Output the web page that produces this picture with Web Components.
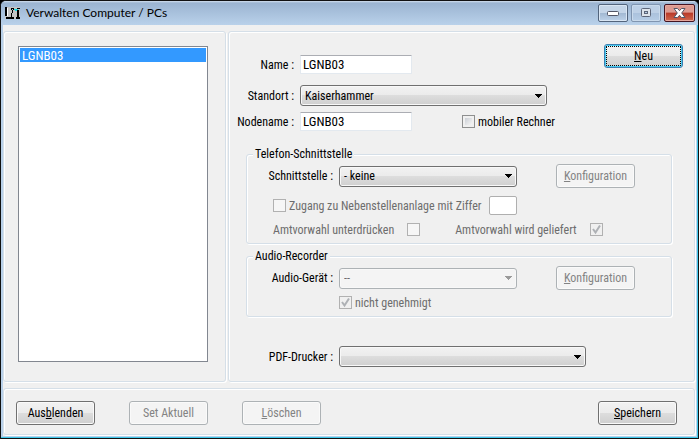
<!DOCTYPE html>
<html lang="de">
<head>
<meta charset="utf-8">
<title>Verwalten Computer / PCs</title>
<style>
    body {
        margin: 0;
        background: #000;
        color: #000;
        font: 12px/16px "Roboto Condensed", Lato, sans-serif;
    }
    .middle {
        display: grid;
        grid-template-columns: 223px 1fr;
        gap: 2px;
        flex: 1;
    }
    .list { padding: 14px 17px 19px 14px; }
    .details { padding: 12px 11px 14px 6px; }
    .head {
        display: flex;
        justify-content: space-between;
        align-items: flex-start;
    }
    .fields {
        display: flex;
        flex-direction: column;
        padding-top: 11px;
        --label-width: 59px;
    }
    .fields combo-box { margin: 11px 0 6px; }
    .row { display: flex; align-items: center; }
    .between { justify-content: space-between; }
    .node { gap: 50px; }
    .groups {
        display: flex;
        flex-direction: column;
        gap: 5px;
        margin: 16px 11px 0 11px;
        --label-width: 86px;
    }
    .group-row { padding-right: 36px; }
    .phone-line { gap: 3px; margin: 8px 0 8px 26px; }
    .prefix { gap: 35px; margin-left: 26px; }
    .approved { margin: 6px 0 0 92px; }
    .printer { margin-top: 29px; --label-width: 98px; }
    .footer {
        display: flex;
        gap: 34px;
        padding: 12px 17px 9px 12px;
        margin-top: 6px;
    }
    .last { margin-left: auto; }
</style>
</head>
<body>

<template id="app-window">
    <style>
        :host {
            display: flex;
            flex-direction: column;
            box-sizing: border-box;
            min-height: 100vh;
            border: 1px solid #111;
            border-radius: 6px 6px 0 0;
            background: #b9d1ea;
            box-shadow: inset -1px -1px #3fc8ea;
            padding: 0 2px 2px;
        }
        header {
            display: flex;
            align-items: center;
            height: 24px;
            padding: 0 1px 0 4px;
            margin: 0 -2px;
            border-radius: 5px 5px 0 0;
            background: linear-gradient(#d3e0ee 0, #9bb4d1 2px, #b9d1ea 100%);
        }
        header > svg { margin-right: 5px; }
        h1 {
            flex: 1;
            margin: 0;
            font: 12px/20px Lato, sans-serif;
        }
        nav { display: flex; gap: 3px; margin-right: 2px; }
        nav button {
            display: grid;
            place-items: center;
            width: 30px;
            height: 18px;
            padding: 0;
            border: 1px solid #52647c;
            border-radius: 2px;
            background: linear-gradient(#c4d5e8 50%, #a1b8d2 50%, #bdd2e9);
            box-shadow: inset 0 0 0 1px #d9e6f4;
        }
        nav button:disabled {
            border-color: #8095b0;
            background: linear-gradient(#bdd0e6 50%, #aac1dc 50%, #b6cde6);
            box-shadow: inset 0 0 0 1px #c9daec;
        }
        nav .close {
            width: 31px;
            border-color: #431422;
            background: linear-gradient(#dc9a90 45%, #b93827 50%, #cf6a50);
            box-shadow: inset 0 0 0 1px #e6a69c;
        }
        main {
            display: flex;
            flex: 1;
            flex-direction: column;
            box-sizing: border-box;
            padding: 6px 1px 1px 0;
            background: #f0f0f0;
        }
    </style>
    <header>
        <svg width="16" height="13" viewBox="0 0 16 13" shape-rendering="crispEdges" aria-hidden="true">
            <path fill="#c4c4c4" d="M0 0h15v12H0z"/>
            <path fill="#000" d="M0 0h2v9H0zM1 10h4v2H1zM6 1h3v1H6zM6 2h1v1H6zM7 3h1v3H7zM6 6h1v4H6zM5 10h4v2H5zM12 3h2v7h-2zM11 10h4v2h-4zM8 2h1v1H8zM12 1h3v1h-3z"/>
            <path fill="#18d8e0" d="M9 2h4v1H9zM10 3h2v1h-2z"/>
            <path fill="#fff" d="M2 1h1v8H2z"/>
        </svg>
        <h1></h1>
        <nav>
            <button type="button" aria-label="Minimieren">
                <svg width="12" height="6" viewBox="0 0 12 6"><rect x=".5" y="1.5" width="11" height="4" rx="1" fill="#fff" stroke="#535666"/></svg>
            </button>
            <button type="button" aria-label="Maximieren" disabled>
                <svg width="12" height="10" viewBox="0 0 12 10"><rect x="1.5" y=".5" width="9" height="8" rx="1" fill="#dde3ea" stroke="#5c6577"/><rect x="4.500" y="3.500" width="3" height="2" fill="#b5cbe4" stroke="#5c6577"/></svg>
            </button>
            <button type="button" class="close" aria-label="Schließen">
                <svg width="13" height="10" viewBox="0 0 13 10"><path fill="#fff" stroke="#535666" d="M1 .5h3.500l2 2.200 2-2.200H12L8.700 5l3.300 4.500H8.500l-2-2.200-2 2.200H1L4.300 5z"/></svg>
            </button>
        </nav>
    </header>
    <main><slot></slot></main>
</template>

<template id="etched-panel">
    <style>
        :host {
            display: block;
            box-sizing: border-box;
            border: 1px solid #d5dfe8;
            border-radius: 3px;
            box-shadow: inset 1px 1px #fff, 1px 1px #fff;
        }
    </style>
    <slot></slot>
</template>

<template id="group-box">
    <style>
        :host { display: block; }
        fieldset {
            min-width: 0;
            margin: 0;
            padding: 3px 0 7px;
            border: 1px solid #d5dfe8;
            border-radius: 3px;
            box-shadow: inset 1px 1px #fff, 1px 1px #fff;
        }
        legend {
            height: 14px;
            margin-left: 6px;
            padding: 0 2px;
            line-height: 14px;
            background: #f0f0f0;
        }
    </style>
    <fieldset>
        <legend></legend>
        <slot></slot>
    </fieldset>
</template>

<template id="push-button">
    <style>
        :host { display: block; }
        button {
            display: block;
            box-sizing: border-box;
            width: 79px;
            height: 24px;
            padding: 0;
            border: 1px solid #707070;
            border-radius: 3px;
            background: linear-gradient(#f2f2f2, #ebebeb 50%, #dddddd 50%, #cfcfcf);
            box-shadow: inset 0 0 0 1px #fafafa;
            color: inherit;
            font: inherit;
        }
        button:disabled {
            border-color: #adb2b5;
            background: #f4f4f4;
            color: #838383;
        }
        :host([default]) button {
            border-color: #3c7fb1;
            box-shadow: inset 0 0 0 1px #48cdf4;
            outline: 1px dotted #000;
            outline-offset: -3px;
        }
    </style>
    <button type="button"><slot></slot></button>
</template>

<template id="text-field">
    <style>
        :host { display: flex; align-items: center; gap: 6px; }
        label {
            flex: none;
            width: var(--label-width);
            text-align: right;
            white-space: nowrap;
        }
        input {
            box-sizing: border-box;
            width: 112px;
            height: 19px;
            padding: 0 2px;
            border: 1px solid #e3e9ef;
            border-top-color: #abadb3;
            border-radius: 1px;
            background: #fff;
            color: inherit;
            font: inherit;
            font-size: 13px;
        }
        :host([disabled]) { gap: 8px; }
        :host([disabled]) label { width: auto; color: #6d6d6d; }
        :host([disabled]) input {
            width: 28px;
            border-color: #afafaf;
            border-radius: 2px;
        }
    </style>
    <label for="control"></label>
    <input id="control" type="text">
</template>

<template id="combo-box">
    <style>
        :host { display: flex; align-items: center; gap: 6px; }
        label {
            flex: none;
            width: var(--label-width);
            text-align: right;
            white-space: nowrap;
        }
        .box { display: grid; align-items: center; }
        select, svg { grid-area: 1 / 1; }
        svg {
            justify-self: end;
            margin-right: 5px;
            pointer-events: none;
        }
        select {
            appearance: none;
            box-sizing: border-box;
            width: 178px;
            height: 21px;
            padding: 0 20px 0 4px;
            border: 1px solid #707070;
            border-radius: 3px;
            background: linear-gradient(#f2f2f2, #ebebeb 50%, #dddddd 50%, #cfcfcf);
            box-shadow: inset 0 0 0 1px #f8f8f8;
            color: inherit;
            font: inherit;
        }
        :host([wide]) select { width: 247px; }
        select:disabled {
            border-color: #adb2b5;
            background: #f4f4f4;
            color: #6d6d6d;
            opacity: 1;
        }
        select:disabled + svg { color: #9a9a9a; }
    </style>
    <label for="control"></label>
    <span class="box">
        <select id="control"></select>
        <svg width="7" height="4" viewBox="0 0 7 4" aria-hidden="true" shape-rendering="crispEdges"><path fill="currentColor" d="M0 0h7v1H0zM1 1h5v1H1zM2 2h3v1H2zM3 3h1v1H3z"/></svg>
    </span>
</template>

<template id="check-box">
    <style>
        :host { display: flex; align-items: center; height: 13px; gap: 3px; }
        :host([label-first]) { flex-direction: row-reverse; gap: 13px; }
        label { white-space: nowrap; }
        input {
            appearance: none;
            flex: none;
            box-sizing: border-box;
            width: 13px;
            height: 13px;
            margin: 0;
            border: 1px solid #8e8f8f;
            background: linear-gradient(135deg, #cbcfd5, #f6f6f6) content-box #f4f4f4;
            padding: 2px;
            outline: 0;
        }
        input:disabled { border-color: #b1b1b1; background: #f6f6f6; }
        input:disabled + label { color: #6d6d6d; }
        input:checked {
            padding: 0;
            background: #f0f0f0 url("data:image/svg+xml,%3Csvg xmlns='http://www.w3.org/2000/svg' viewBox='0 0 11 11'%3E%3Cpath d='M2 5l2.500 3.500L9 1.500' fill='none' stroke='%23aeb1b5' stroke-width='2'/%3E%3C/svg%3E") center / 11px no-repeat;
        }
    </style>
    <input id="control" type="checkbox">
    <label for="control"></label>
</template>

<template id="list-box">
    <style>
        :host { display: grid; box-sizing: border-box; height: 100%; }
        select {
            width: 100%;
            height: 100%;
            box-sizing: border-box;
            margin: 0;
            padding: 1px;
            border: 1px solid #828790;
            border-radius: 0;
            outline: 0;
            overflow: hidden;
            background: #fff;
            color: #000;
            font: inherit;
            font-size: 13px;
        }
        option {
            min-height: 0;
            height: 14px;
            padding: 0 2px;
            line-height: 14px;
        }
        option:checked {
            background: #3399ff linear-gradient(#3399ff, #3399ff);
            color: #fff;
        }
    </style>
    <select size="20"></select>
</template>

<app-window caption="Verwalten Computer / PCs">
    <div class="middle">
        <etched-panel class="list">
            <list-box label="Computer" options="LGNB03"></list-box>
        </etched-panel>
        <etched-panel class="details">
            <div class="head">
                <div class="fields">
                    <text-field label="Name :" value="LGNB03"></text-field>
                    <combo-box wide label="Standort :" options="Kaiserhammer"></combo-box>
                    <div class="row node">
                        <text-field label="Nodename :" value="LGNB03"></text-field>
                        <check-box label="mobiler Rechner"></check-box>
                    </div>
                </div>
                <push-button default><u>N</u>eu</push-button>
            </div>
            <div class="groups">
                <group-box label="Telefon-Schnittstelle">
                    <div class="row between group-row">
                        <combo-box label="Schnittstelle :" options="- keine"></combo-box>
                        <push-button disabled><u>K</u>onfiguration</push-button>
                    </div>
                    <div class="row phone-line">
                        <check-box disabled label="Zugang zu Nebenstellenanlage"></check-box>
                        <text-field disabled label="mit Ziffer"></text-field>
                    </div>
                    <div class="row prefix">
                        <check-box disabled label-first label="Amtvorwahl unterdrücken"></check-box>
                        <check-box disabled checked label-first label="Amtvorwahl wird geliefert"></check-box>
                    </div>
                </group-box>
                <group-box label="Audio-Recorder">
                    <div class="row between group-row">
                        <combo-box disabled label="Audio-Gerät :" options="--"></combo-box>
                        <push-button disabled><u>K</u>onfiguration</push-button>
                    </div>
                    <check-box class="approved" disabled checked label="nicht genehmigt"></check-box>
                </group-box>
            </div>
            <combo-box class="printer" wide label="PDF-Drucker :" options=""></combo-box>
        </etched-panel>
    </div>
    <etched-panel class="footer">
        <push-button>Aus<u>b</u>lenden</push-button>
        <push-button disabled>Set Aktuell</push-button>
        <push-button disabled><u>L</u>öschen</push-button>
        <push-button class="last"><u>S</u>peichern</push-button>
    </etched-panel>
</app-window>

<script>
    class BaseElement extends HTMLElement {

        constructor() {
            super();
            this._root = this.attachShadow({ mode: 'open' });
            var template = document.querySelector('template#' + this.localName);
            this._root.appendChild(template.content.cloneNode(true));
        }

        find(selector) {
            return this._root.querySelector(selector);
        }

        attr(name) {
            return this.getAttribute(name) || '';
        }
    }

    class AppWindow extends BaseElement {
        connectedCallback() {
            this.find('h1').textContent = this.attr('caption');
        }
    }

    class EtchedPanel extends BaseElement { }

    class GroupBox extends BaseElement {
        connectedCallback() {
            this.find('legend').textContent = this.attr('label');
        }
    }

    class PushButton extends BaseElement {
        connectedCallback() {
            this.find('button').disabled = this.hasAttribute('disabled');
        }
    }

    class TextField extends BaseElement {
        connectedCallback() {
            var input = this.find('input');
            this.find('label').textContent = this.attr('label');
            input.value = this.attr('value');
            input.disabled = this.hasAttribute('disabled');
        }
    }

    class CheckBox extends BaseElement {
        connectedCallback() {
            var input = this.find('input');
            this.find('label').textContent = this.attr('label');
            input.checked = this.hasAttribute('checked');
            input.disabled = this.hasAttribute('disabled');
        }
    }

    class ComboBox extends BaseElement {
        connectedCallback() {
            var select = this.find('select');
            this.find('label').textContent = this.attr('label');
            select.disabled = this.hasAttribute('disabled');
            select.replaceChildren(...this.attr('options').split('|').map((text) => new Option(text)));
        }
    }

    class ListBox extends BaseElement {
        connectedCallback() {
            var select = this.find('select');
            select.setAttribute('aria-label', this.attr('label'));
            select.replaceChildren(...this.attr('options').split('|').map((text) => new Option(text)));
            select.selectedIndex = 0;
        }
    }

    customElements.define('app-window', AppWindow);
    customElements.define('etched-panel', EtchedPanel);
    customElements.define('group-box', GroupBox);
    customElements.define('push-button', PushButton);
    customElements.define('text-field', TextField);
    customElements.define('check-box', CheckBox);
    customElements.define('combo-box', ComboBox);
    customElements.define('list-box', ListBox);
</script>
</body>
</html>
